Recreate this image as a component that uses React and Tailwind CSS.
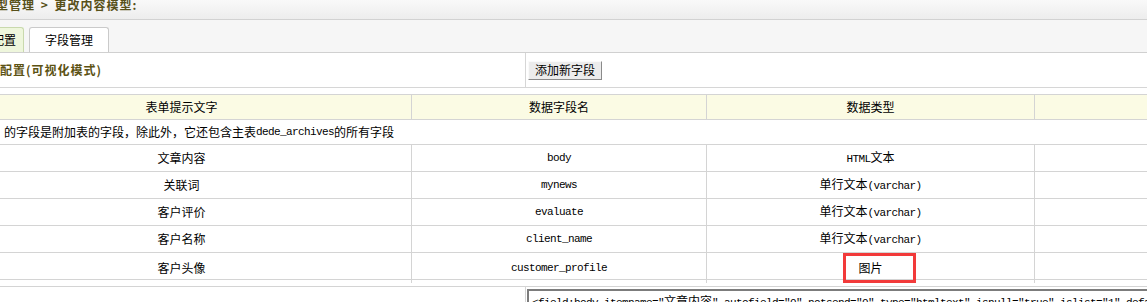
import React from 'react';

const cjk = "font-['SimSun','Noto_Sans_CJK_SC',sans-serif]";
const mono = "font-['Liberation_Mono','Noto_Sans_CJK_SC',monospace] text-[11px] tracking-[-0.6px]";

const fields = [
  { label: '文章内容', name: 'body', type: 'HTML文本' },
  { label: '关联词', name: 'mynews', type: '单行文本', extra: '(varchar)' },
  { label: '客户评价', name: 'evaluate', type: '单行文本', extra: '(varchar)' },
  { label: '客户名称', name: 'client_name', type: '单行文本', extra: '(varchar)' },
  { label: '客户头像', name: 'customer_profile', type: '图片', mark: true },
];

function App() {
  return (
    <div className={`w-full h-[302px] overflow-hidden bg-white text-[12px] text-black ${cjk}`}>
      <div className="ml-[-48px] w-[1260px]">
        {/* 面包屑 */}
        <div className="h-[20px] bg-gradient-to-b from-[#f9f9f9] to-[#ededed] border-b border-[#d2d2d2] pl-[44px] overflow-hidden">
          <div className="mt-[-3px] font-bold text-[#57501a] leading-[16px] text-[12px] tracking-[1px]">
            型管理 <span className="mx-[2px]">&gt;</span> 更改内容模型:
          </div>
        </div>

        {/* 标签 */}
        <div className="h-[33px] bg-[#f6f6f6] border-b border-[#d0d0d0] flex items-end pl-[12px] gap-[5px]">
          <div className="h-[25px] w-[60px] bg-[#eef6dc] border border-b-0 border-[#c9d9ad] rounded-t-[3px] flex items-center justify-end pr-[7px]">
            配置
          </div>
          <div className="h-[25px] w-[80px] bg-white border border-b-0 border-[#cacaca] rounded-t-[3px] flex items-center justify-center text-[12px]">
            字段管理
          </div>
        </div>

        {/* 标题行 */}
        <div className="flex h-[35px] border-b border-[#d6d6d6]">
          <div className="w-[574px] border-r border-[#d6d6d6] flex items-center pl-[22px] font-bold text-[#5c5213] tracking-[1px]">
            字段配置(可视化模式)
          </div>
          <div className="flex items-center pl-[2px]">
            <button className="h-[19px] px-[6px] bg-[#ececec] border border-t-[#fafafa] border-l-[#fafafa] border-r-[#8a8a8a] border-b-[#8a8a8a] text-[12px] leading-none">
              添加新字段
            </button>
          </div>
        </div>

        {/* 字段表 */}
        <div className="mt-[6px] border-t border-[#d4d4d4]">
          <div className="grid grid-cols-[459px_295px_328px_1fr] h-[25px] bg-[#fbfbe4] border-b border-[#d4d4d4]">
            <div className="flex items-center justify-center">表单提示文字</div>
            <div className="flex items-center justify-center border-l border-[#d4d4d4]">数据字段名</div>
            <div className="flex items-center justify-center border-l border-[#d4d4d4]">数据类型</div>
            <div className="border-l border-[#d4d4d4]" />
          </div>
          <div className="h-[25px] flex items-center pl-[52px] border-b border-[#d4d4d4] whitespace-nowrap">
            的字段是附加表的字段，除此外，它还包含主表<span className={mono}>dede_archives</span>的所有字段
          </div>
          {fields.map((f) => (
            <div key={f.name} className="grid grid-cols-[459px_295px_328px_1fr] h-[27px] border-b border-[#d4d4d4]">
              <div className="flex items-center justify-center">{f.label}</div>
              <div className={`flex items-center justify-center border-l border-[#d4d4d4] ${mono}`}>{f.name}</div>
              <div className="flex items-center justify-center border-l border-[#d4d4d4]">
                {f.mark ? (
                  <span className="w-[73px] h-[30px] ml-[17px] border-[3px] border-[#f23a3a] flex items-center justify-start pl-[13px] shrink-0">
                    图片
                  </span>
                ) : (
                  <span>
                    {f.type === 'HTML文本' ? (
                      <>
                        <span className={mono}>HTML</span>文本
                      </>
                    ) : (
                      f.type
                    )}
                    {f.extra && <span className={mono}>{f.extra}</span>}
                  </span>
                )}
              </div>
              <div className="border-l border-[#d4d4d4]" />
            </div>
          ))}
        </div>

        {/* 模板 */}
        <div className="mt-[6px] border-t border-[#d4d4d4] flex">
          <div className="w-[574px] border-r border-[#d4d4d4] h-[20px]" />
          <div className="flex-1 pt-[2px] pl-[1px]">
            <div className="h-[20px] border-t-2 border-l-2 border-[#7c7c7c] pl-[3px] pt-[3px] whitespace-nowrap overflow-hidden text-[12px] leading-[14px]">
              <span className={mono}>&lt;field:body itemname="</span>文章内容<span className={mono}>" autofield="0" notsend="0" type="htmltext" isnull="true" islist="1" default=""</span>
            </div>
          </div>
        </div>
      </div>
    </div>
  );
}

export default App;
